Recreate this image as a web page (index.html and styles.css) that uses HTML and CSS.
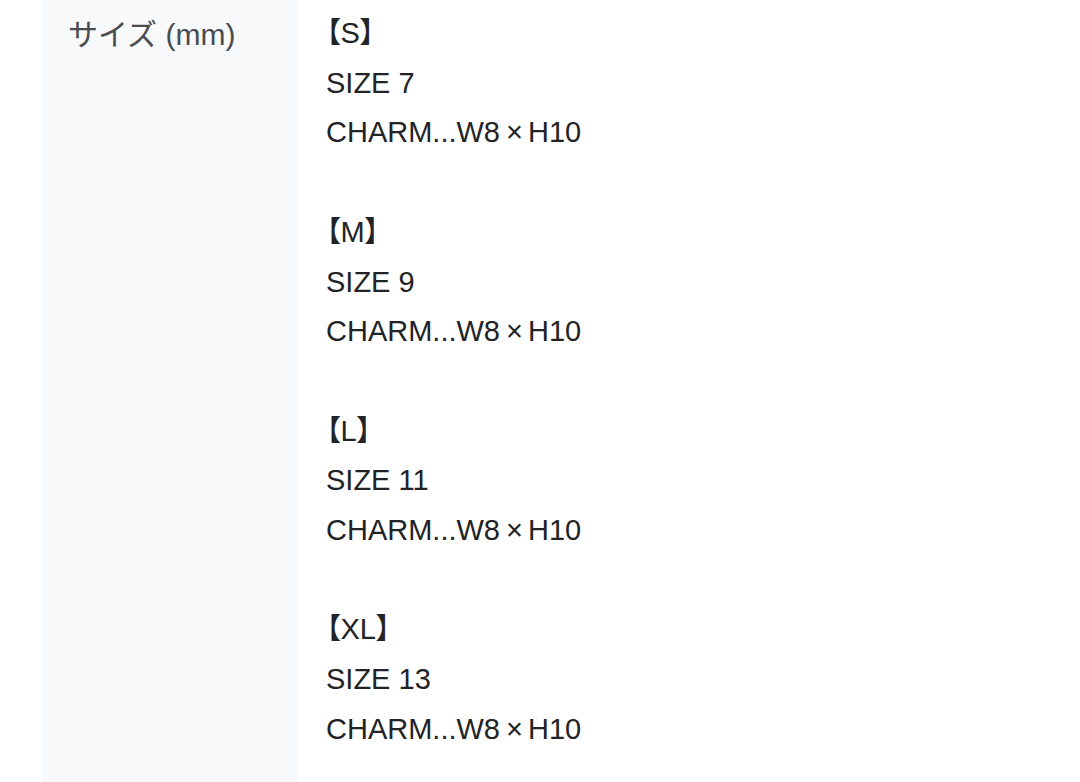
FILE: index.html
```html
<!DOCTYPE html>
<html lang="ja">
<head>
<meta charset="utf-8">
<link rel="stylesheet" href="styles.css">
</head>
<body>
<dl class="spec">
  <dt class="spec-label">サイズ (mm)</dt>
  <dd class="spec-value">
    <div class="group">
      <p>【S】</p>
      <p>SIZE 7</p>
      <p>CHARM...W8<span class="times">×</span>H10</p>
    </div>
    <div class="group">
      <p>【M】</p>
      <p>SIZE 9</p>
      <p>CHARM...W8<span class="times">×</span>H10</p>
    </div>
    <div class="group">
      <p>【L】</p>
      <p>SIZE 11</p>
      <p>CHARM...W8<span class="times">×</span>H10</p>
    </div>
    <div class="group">
      <p>【XL】</p>
      <p>SIZE 13</p>
      <p>CHARM...W8<span class="times">×</span>H10</p>
    </div>
  </dd>
</dl>
</body>
</html>
```
FILE: styles.css
```css
html, body {
  margin: 0;
  padding: 0;
  background: #ffffff;
}
body {
  font-family: "Liberation Sans", "Noto Sans CJK JP", sans-serif;
  color: #222326;
  font-feature-settings: "palt";
}
.spec {
  display: flex;
  margin: 0 0 0 42px;
  min-height: 782px;
}
.spec-label {
  width: 256px;
  box-sizing: border-box;
  padding: 10px 0 0 26px;
  background: #f8f9fb;
  color: #4a4c50;
  font-size: 30px;
  line-height: 50px;
  font-feature-settings: normal;
}
.spec-value {
  margin: 0;
  padding: 9px 0 0 28px;
  font-size: 29px;
  line-height: 49.7px;
}
.group {
  margin-bottom: 49.7px;
}
.group p {
  margin: 0;
}
.times {
  margin: 0 5px 0 6px;
}
```
